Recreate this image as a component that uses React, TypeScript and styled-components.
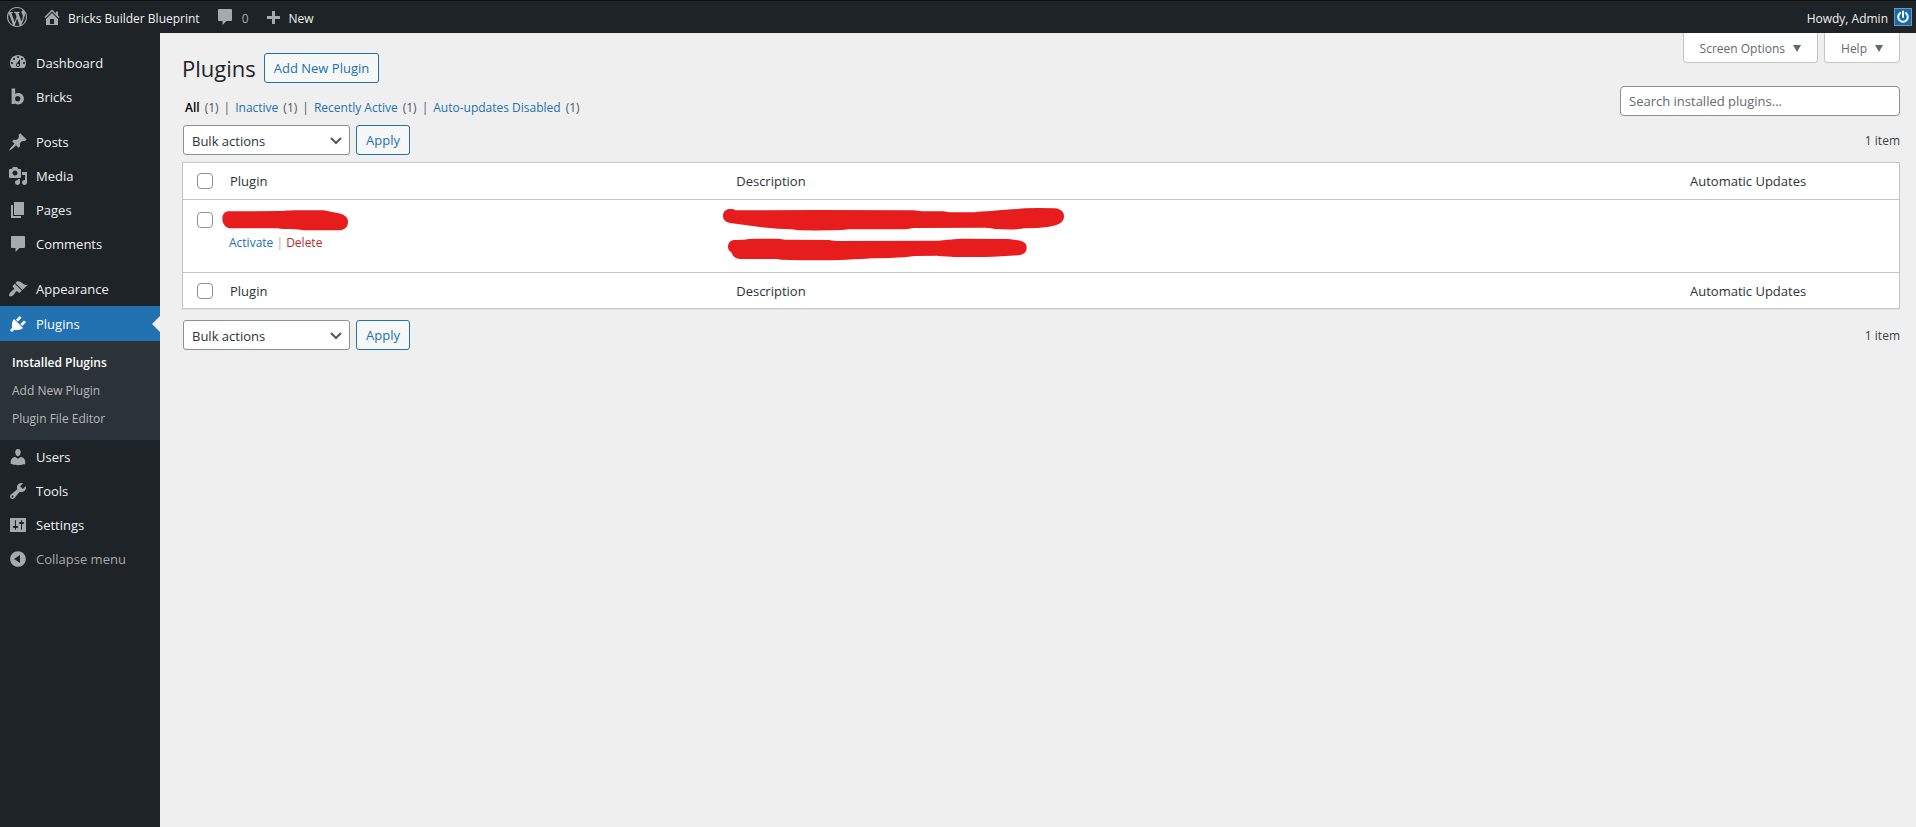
import React, { ReactNode } from "react";
import styled, { createGlobalStyle } from "styled-components";

const GlobalStyle = createGlobalStyle`
  *, *::before, *::after { box-sizing: border-box; }
  body {
    margin: 0;
    background: #efefef;
    color: #3c434a;
    font-family: "Open Sans", "Noto Sans", sans-serif;
    font-size: 12px;
    line-height: 20px;
  }
  button, input, select { font: inherit; }
  a { color: #2271b1; text-decoration: none; }
  ul { list-style: none; margin: 0; padding: 0; }
`;

const paths = {
  wordpress:
    "M20 10c0-5.51-4.49-10-10-10C4.48 0 0 4.49 0 10c0 5.52 4.48 10 10 10 5.51 0 10-4.48 10-10zM7.78 15.37L4.37 6.22c.55-.02 1.17-.08 1.17-.08.5-.06.44-1.13-.06-1.11 0 0-1.45.11-2.37.11-.18 0-.37 0-.58-.01C4.12 2.69 6.87 1.11 10 1.11c2.33 0 4.45.87 6.05 2.34-.68-.11-1.65.39-1.65 1.58 0 .74.45 1.36.9 2.1.35.61.55 1.36.55 2.46 0 1.49-1.4 5-1.4 5l-3.03-8.37c.54-.02.82-.17.82-.17.5-.05.44-1.25-.06-1.22 0 0-1.44.12-2.38.12-.87 0-2.33-.12-2.33-.12-.5-.03-.56 1.2-.06 1.22l.92.08 1.26 3.41zM17.41 10c.24-.64.74-1.87.43-4.25.7 1.29 1.05 2.71 1.05 4.25 0 3.29-1.73 6.24-4.4 7.78.97-2.59 1.94-5.2 2.92-7.78zM6.1 18.09C3.12 16.65 1.11 13.53 1.11 10c0-1.3.23-2.48.72-3.59C3.25 10.3 4.67 14.2 6.1 18.09zm4.03-6.63l2.58 6.98c-.86.29-1.76.45-2.71.45-.79 0-1.57-.11-2.29-.33.81-2.38 1.62-4.74 2.42-7.1z",
  home: "M16 8.5l1.53 1.53-1.06 1.06L10 4.6l-6.47 6.49-1.06-1.06L10 2.5l4 4v-2h2v4zm-6-2.46l6 5.99V18H4v-5.97zM12 17v-5H8v5h4z",
  plus: "M17 9v3h-5v5H9v-5H4V9h5V4h3v5h5z",
  dashboard:
    "M3.76 15h12.48A7.953 7.953 0 0 0 18 10c0-4.42-3.58-8-8-8s-8 3.58-8 8c0 1.89.66 3.63 1.76 5zM10 3c.55 0 1 .45 1 1s-.45 1-1 1-1-.45-1-1 .45-1 1-1zM6 5c.55 0 1 .45 1 1s-.45 1-1 1-1-.45-1-1 .45-1 1-1zm8 0c.55 0 1 .45 1 1s-.45 1-1 1-1-.45-1-1 .45-1 1-1zm-5.37 5.55L12 6v6c0 1.1-.9 2-2 2s-2-.9-2-2c0-.57.24-1.08.63-1.45zM4 9c.55 0 1 .45 1 1s-.45 1-1 1-1-.45-1-1 .45-1 1-1zm12 0c.55 0 1 .45 1 1s-.45 1-1 1-1-.45-1-1 .45-1 1-1zm-7 3c0 .55.45 1 1 1s1-.45 1-1-.45-1-1-1-1 .45-1 1z",
  bricks:
    "M3.600 1.500h3.600v5.600C8 6.400 9 6 10.200 6c3.200 0 5.700 2.500 5.700 5.700s-2.500 5.700-5.700 5.700c-1.300 0-2.300-.4-3.100-1.200V17H3.600zM9.700 8.900c-1.500 0-2.700 1.200-2.700 2.800s1.200 2.800 2.700 2.800 2.700-1.200 2.700-2.800S11.200 8.900 9.700 8.900z",
  post: "M10.44 3.02l1.82-1.82 6.36 6.35-1.83 1.82c-1.05-.68-2.48-.57-3.41.36l-.75.75c-.92.93-1.04 2.35-.35 3.41l-1.83 1.82-2.41-2.41-2.8 2.79c-.42.42-3.38 2.71-3.8 2.29s1.86-3.39 2.28-3.81l2.79-2.79L4.1 9.36l1.83-1.82c1.05.69 2.48.57 3.4-.36l.75-.75c.93-.92 1.05-2.35.36-3.41z",
  media:
    "M13 11V4c0-.55-.45-1-1-1h-1.67L9 1H5L3.67 3H2c-.55 0-1 .45-1 1v7c0 .55.45 1 1 1h10c.55 0 1-.45 1-1zM7 4.5c1.38 0 2.5 1.12 2.5 2.5S8.38 9.5 7 9.5 4.5 8.38 4.5 7 5.62 4.5 7 4.5zM14 6h5v10.500c0 1.380-1.120 2.500-2.500 2.500S14 17.880 14 16.500s1.120-2.500 2.500-2.500c.17 0 .34.02.5.05V9h-3V6zm-4 8.050V13h2v3.500c0 1.380-1.120 2.500-2.500 2.500S7 17.880 7 16.500 8.120 14 9.500 14c.17 0 .34.02.5.05z",
  page: "M6 15V2h10v13H6zm-1 1h8v2H3V5h2v11z",
  comment:
    "M4 2h12c.55 0 1 .45 1 1v10c0 .55-.45 1-1 1h-4.500L7.500 18v-4H4c-.55 0-1-.45-1-1V3c0-.55.45-1 1-1z",
  appearance:
    "M14.48 11.06L7.41 3.99l1.5-1.5c.5-.56 2.3-.47 3.51.32 1.21.8 1.43 1.28 2.91 2.1 1.18.64 2.45 1.26 4.45.85zm-.71.71L6.7 4.7 4.93 6.47c-.39.39-.39 1.02 0 1.41l1.06 1.06c.39.39.39 1.03 0 1.42-.6.6-1.43 1.11-2.21 1.69-.35.26-.7.53-1.01.84C1.43 14.23.4 16.08 1.4 17.07c.99 1 2.84-.03 4.18-1.36.31-.31.58-.66.85-1.02.57-.78 1.08-1.61 1.69-2.21.39-.39 1.02-.39 1.41 0l1.06 1.06c.39.39 1.02.39 1.41 0z",
  plugins:
    "M13.11 4.36L9.87 7.6 8 5.73l3.24-3.24c.35-.34 1.05-.2 1.56.32.52.51.66 1.21.31 1.55zm-8 1.77l.91-1.12 9.01 9.01-1.19.84c-.71.71-2.63 1.16-3.82 1.16H6.14L4.9 17.26c-.59.59-1.54.59-2.12 0-.59-.58-.59-1.53 0-2.12l1.24-1.24v-3.88c0-1.13.4-3.19 1.09-3.89zm7.26 3.97l3.24-3.24c.34-.35 1.04-.21 1.55.31.52.51.66 1.21.31 1.55l-3.24 3.25z",
  users:
    "M10 9.25c-2.27 0-2.73-3.44-2.73-3.44C7 4.02 7.82 2 9.97 2c2.16 0 2.98 2.02 2.71 3.81 0 0-.41 3.44-2.68 3.44zm0 2.57L12.72 10c2.39 0 4.52 2.33 4.52 4.53v2.49s-3.65 1.13-7.24 1.13c-3.65 0-7.24-1.13-7.24-1.13v-2.49c0-2.25 1.94-4.48 4.47-4.48z",
  tools:
    "M16.68 9.77c-1.34 1.34-3.3 1.67-4.95.99l-5.41 6.52c-.99.99-2.59.99-3.58 0s-.99-2.59 0-3.57l6.52-5.42c-.68-1.65-.35-3.61.99-4.95 1.28-1.28 3.12-1.62 4.72-1.06l-2.89 2.89 2.82 2.82 2.86-2.87c.53 1.58.18 3.39-1.08 4.65zM3.81 16.21c.4.39 1.04.39 1.43 0 .4-.4.4-1.04 0-1.43-.39-.4-1.03-.4-1.43 0-.39.39-.39 1.03 0 1.43z",
  settings:
    "M18 16V4c0-.55-.45-1-1-1H3c-.55 0-1 .45-1 1v12c0 .55.45 1 1 1h14c.55 0 1-.45 1-1zM8 11h1c.55 0 1 .45 1 1s-.45 1-1 1H8v1.500c0 .28-.22.5-.5.5s-.5-.22-.5-.5V13H6c-.55 0-1-.45-1-1s.45-1 1-1h1V5.500c0-.28.22-.5.5-.5s.5.22.5.5V11zm5-2h-1c-.55 0-1-.45-1-1s.45-1 1-1h1V5.500c0-.28.22-.5.5-.5s.5.22.5.5V7h1c.55 0 1 .45 1 1s-.45 1-1 1h-1v5.500c0 .28-.22.5-.5.5s-.5-.22-.5-.5V9z",
  collapse:
    "M10 2.160c-4.330 0-7.840 3.510-7.840 7.840s3.510 7.840 7.840 7.840 7.840-3.510 7.840-7.840S14.330 2.160 10 2.160zm2 11.720L6.120 9.960 12 6.040v7.840z",
};

type IconName = keyof typeof paths;

const IconSvg = styled.svg`
  flex: none;
  width: 20px;
  height: 20px;
  fill: currentColor;
`;

const Icon = ({ name }: { name: IconName }) => (
  <IconSvg viewBox="0 0 20 20" aria-hidden="true">
    <path d={paths[name]} fillRule="evenodd" />
  </IconSvg>
);

/* Admin bar */

const Page = styled.div`
  display: flex;
  flex-direction: column;
  min-height: 100vh;
`;

const AdminBar = styled.header`
  display: flex;
  align-items: center;
  height: 33px;
  padding: 0 4px 0 7px;
  border-top: 1px solid #0b0d0f;
  background: #1d2327;
`;

const BarLink = styled.a<{ $gap?: number; $after: number }>`
  display: flex;
  align-items: center;
  gap: ${(p) => p.$gap ?? 6}px;
  margin-right: ${(p) => p.$after}px;
  color: #f0f0f1;
  svg { color: #a7aaad; }
`;

const BarLabel = styled.span<{ $muted?: boolean }>`
  padding-top: 3px;
  color: ${(p) => (p.$muted ? "#a7aaad" : "inherit")};
`;

const Account = styled.a`
  display: flex;
  align-items: center;
  gap: 6px;
  margin-left: auto;
  color: #f0f0f1;
`;

const Avatar = styled.svg`
  width: 18px;
  height: 18px;
  border: 1px solid #8c8f94;
  background: #0a6fb5;
`;

/* Side menu */

const Body = styled.div`
  display: flex;
  flex: 1;
`;

const SideNav = styled.nav`
  flex: none;
  width: 160px;
  padding-top: 13px;
  background: #1d2327;
`;

const MenuItem = styled.li<{ $spaced?: boolean }>`
  margin-top: ${(p) => (p.$spaced ? 11 : 0)}px;
`;

const MenuLink = styled.a<{ $current?: boolean }>`
  position: relative;
  display: flex;
  align-items: center;
  gap: 8px;
  height: ${(p) => (p.$current ? 35 : 34)}px;
  padding-left: 8px;
  font-size: 13px;
  color: ${(p) => (p.$current ? "#fff" : "#f0f0f1")};
  background: ${(p) => (p.$current ? "#2271b1" : "transparent")};
  svg { color: ${(p) => (p.$current ? "#fff" : "#a7aaad")}; }
  &::after {
    content: ${(p) => (p.$current ? '""' : "none")};
    position: absolute;
    right: 0;
    top: 10px;
    border: 8px solid transparent;
    border-left-width: 0;
    border-right-color: #efefef;
  }
`;

const SubMenu = styled.ul`
  padding: 8px 0 7px;
  background: #2c3338;
`;

const SubLink = styled.a<{ $current?: boolean }>`
  display: block;
  padding: 4px 12px;
  font-weight: ${(p) => (p.$current ? 600 : 400)};
  color: ${(p) => (p.$current ? "#fff" : "#b4b9be")};
`;

const CollapseButton = styled.button`
  display: flex;
  align-items: center;
  gap: 8px;
  height: 34px;
  padding: 0 0 0 8px;
  border: 0;
  background: none;
  font-size: 13px;
  color: #a7aaad;
`;

/* Content */

const Main = styled.main`
  flex: 1;
  min-width: 0;
  padding: 0 16px 0 22px;
`;

const Head = styled.div`
  display: flex;
  justify-content: space-between;
`;

const HeadLeft = styled.div`
  padding-top: 20px;
`;

const HeadRight = styled.div`
  display: flex;
  flex-direction: column;
  align-items: flex-end;
  gap: 23px;
`;

const TitleRow = styled.div`
  display: flex;
  align-items: center;
  gap: 8px;
`;

const Title = styled.h1`
  margin: 0;
  font-size: 22px;
  line-height: 30px;
  font-weight: 400;
  color: #1d2327;
`;

const OutlineButton = styled.button`
  height: 30px;
  padding: 0 9px;
  border: 1px solid #2271b1;
  border-radius: 3px;
  background: #f6f7f7;
  font-size: 13px;
  color: #2271b1;
  white-space: nowrap;
`;

const Filters = styled.ul`
  display: flex;
  margin: 15px 0 0 3px;
  color: #50575e;
  li { display: flex; }
  li + li::before {
    content: "|";
    margin: 0 5px;
  }
`;

const FilterLink = styled.a<{ $current?: boolean }>`
  margin-right: 5px;
  font-weight: ${(p) => (p.$current ? 600 : 400)};
  color: ${(p) => (p.$current ? "#000" : "#2271b1")};
`;

const MetaTabs = styled.div`
  display: flex;
  gap: 6px;
`;

const MetaTab = styled.button`
  display: flex;
  align-items: center;
  gap: 8px;
  height: 30px;
  padding: 2px 16px 0;
  border: 1px solid #c3c4c7;
  border-top: 0;
  border-radius: 0 0 4px 4px;
  background: #fff;
  color: #646970;
  svg {
    width: 8px;
    height: 7px;
    fill: #646970;
  }
`;

const SearchInput = styled.input`
  width: 280px;
  height: 30px;
  padding: 0 8px;
  border: 1px solid #8c8f94;
  border-radius: 4px;
  background: #fff;
  font-size: 13px;
  color: #2c3338;
  &::placeholder { color: #646970; opacity: 1; }
`;

const TableNav = styled.form<{ $before: number; $after: number }>`
  display: flex;
  align-items: center;
  gap: 6px;
  padding: ${(p) => p.$before}px 0 ${(p) => p.$after}px 1px;
`;

const SelectBox = styled.div`
  position: relative;
  width: 167px;
  svg {
    position: absolute;
    right: 8px;
    top: 12px;
    width: 12px;
    height: 8px;
    pointer-events: none;
  }
`;

const Select = styled.select`
  appearance: none;
  display: block;
  width: 100%;
  height: 30px;
  padding: 1px 24px 0 8px;
  border: 1px solid #8c8f94;
  border-radius: 3px;
  background: #fff;
  font-size: 13px;
  color: #2c3338;
`;

const ItemCount = styled.span`
  margin-left: auto;
  padding-top: 2px;
`;

/* Plugins table */

const Table = styled.table`
  width: 100%;
  table-layout: fixed;
  border: 1px solid #c3c4c7;
  border-spacing: 0;
  background: #fff;
  box-shadow: 0 1px 1px rgba(0, 0, 0, 0.04);
`;

const Col = styled.col<{ $width?: string }>`
  width: ${(p) => p.$width ?? "auto"};
`;

const HeadCell = styled.th<{ $line?: boolean }>`
  height: ${(p) => (p.$line ? 37 : 35)}px;
  padding: 0 10px 0 9px;
  border-bottom: ${(p) => (p.$line ? "1px solid #c3c4c7" : "0")};
  text-align: left;
  font-size: 13px;
  font-weight: 400;
  color: #2c3338;
`;

const CheckHead = styled(HeadCell)`
  padding: 0 0 0 14px;
`;

const Cell = styled.td<{ $pad: string }>`
  height: 73px;
  padding: ${(p) => p.$pad};
  border-bottom: 1px solid #c3c4c7;
  vertical-align: top;
`;

const Checkbox = styled.input`
  appearance: none;
  display: block;
  width: 16px;
  height: 16px;
  margin: 0;
  border: 1px solid #8c8f94;
  border-radius: 4px;
  background: #fff;
`;

const Marker = styled.svg<{ $w: number; $h: number; $pull?: number }>`
  display: block;
  width: ${(p) => p.$w}px;
  height: ${(p) => p.$h}px;
  margin-left: ${(p) => -(p.$pull ?? 0)}px;
  fill: #e71d1d;
`;

const RowActions = styled.div`
  padding: 2px 0 0 7px;
  color: #a7aaad;
`;

const DeleteLink = styled.a`
  color: #b32d2e;
`;

const Item = ({
  icon,
  children,
  spaced,
}: {
  icon: IconName;
  children: ReactNode;
  spaced?: boolean;
}) => (
  <MenuItem $spaced={spaced}>
    <MenuLink href="#">
      <Icon name={icon} />
      {children}
    </MenuLink>
  </MenuItem>
);

const BulkActions = ({ id, before, after }: { id: string; before: number; after: number }) => (
  <TableNav $before={before} $after={after}>
    <SelectBox>
      <Select id={id} aria-label="Select bulk action">
        <option>Bulk actions</option>
        <option>Activate</option>
        <option>Delete</option>
      </Select>
      <svg viewBox="0 0 12 8" aria-hidden="true">
        <path d="M1 1l5 5 5-5" fill="none" stroke="#50575e" strokeWidth="2" />
      </svg>
    </SelectBox>
    <OutlineButton type="button">Apply</OutlineButton>
    <ItemCount>1 item</ItemCount>
  </TableNav>
);

const HeadingRow = ({ line }: { line?: boolean }) => (
  <tr>
    <CheckHead $line={line}>
      <Checkbox type="checkbox" aria-label="Select all" />
    </CheckHead>
    <HeadCell $line={line}>Plugin</HeadCell>
    <HeadCell $line={line}>Description</HeadCell>
    <HeadCell $line={line}>Automatic Updates</HeadCell>
  </tr>
);

const Triangle = () => (
  <svg viewBox="0 0 8 7" aria-hidden="true">
    <path d="M0 0h8L4 7z" />
  </svg>
);

const filters = [
  { label: "All", current: true },
  { label: "Inactive" },
  { label: "Recently Active" },
  { label: "Auto-updates Disabled" },
];

export default function App() {
  return (
    <Page>
      <GlobalStyle />
      <AdminBar>
        <BarLink href="#" $after={15} aria-label="About WordPress">
          <Icon name="wordpress" />
        </BarLink>
        <BarLink href="#" $after={15}>
          <Icon name="home" />
          <BarLabel>Bricks Builder Blueprint</BarLabel>
        </BarLink>
        <BarLink href="#" $gap={7} $after={14}>
          <Icon name="comment" />
          <BarLabel $muted>0</BarLabel>
        </BarLink>
        <BarLink href="#" $after={0}>
          <Icon name="plus" />
          <BarLabel>New</BarLabel>
        </BarLink>
        <Account href="#">
          <BarLabel>Howdy, Admin</BarLabel>
          <Avatar viewBox="0 0 16 16" aria-hidden="true">
            <path
              d="M5.200 4a4.800 4.800 0 1 0 5.600 0M8 2.500V8"
              fill="none"
              stroke="#fff"
              strokeWidth="2"
              strokeLinecap="round"
            />
          </Avatar>
        </Account>
      </AdminBar>

      <Body>
        <SideNav aria-label="Main menu">
          <ul>
            <Item icon="dashboard">Dashboard</Item>
            <Item icon="bricks">Bricks</Item>
            <Item icon="post" spaced>Posts</Item>
            <Item icon="media">Media</Item>
            <Item icon="page">Pages</Item>
            <Item icon="comment">Comments</Item>
            <Item icon="appearance" spaced>Appearance</Item>
            <MenuItem>
              <MenuLink href="#" $current>
                <Icon name="plugins" />
                Plugins
              </MenuLink>
              <SubMenu>
                <li><SubLink href="#" $current>Installed Plugins</SubLink></li>
                <li><SubLink href="#">Add New Plugin</SubLink></li>
                <li><SubLink href="#">Plugin File Editor</SubLink></li>
              </SubMenu>
            </MenuItem>
            <Item icon="users">Users</Item>
            <Item icon="tools">Tools</Item>
            <Item icon="settings">Settings</Item>
            <li>
              <CollapseButton type="button">
                <Icon name="collapse" />
                Collapse menu
              </CollapseButton>
            </li>
          </ul>
        </SideNav>

        <Main>
          <Head>
            <HeadLeft>
              <TitleRow>
                <Title>Plugins</Title>
                <OutlineButton type="button">Add New Plugin</OutlineButton>
              </TitleRow>
              <Filters>
                {filters.map((f) => (
                  <li key={f.label}>
                    <FilterLink href="#" $current={f.current}>{f.label}</FilterLink>
                    <span>(1)</span>
                  </li>
                ))}
              </Filters>
            </HeadLeft>
            <HeadRight>
              <MetaTabs>
                <MetaTab type="button">Screen Options <Triangle /></MetaTab>
                <MetaTab type="button">Help <Triangle /></MetaTab>
              </MetaTabs>
              <SearchInput
                type="search"
                aria-label="Search installed plugins"
                placeholder="Search installed plugins..."
              />
            </HeadRight>
          </Head>

          <BulkActions id="bulk-top" before={7} after={7} />
          <Table>
            <colgroup>
              <Col $width="38px" />
              <Col $width="29.5%" />
              <Col />
              <Col $width="218px" />
            </colgroup>
            <thead>
              <HeadingRow line />
            </thead>
            <tbody>
              <tr>
                <Cell $pad="12px 0 0 14px">
                  <Checkbox type="checkbox" aria-label="Select plugin" />
                </Cell>
                <Cell $pad="9px 0 0 1px">
                  <Marker viewBox="186 387 381 66" $w={127} $h={22} aria-hidden="true">
                    <path d="M187 416C187 402 195 394 208 394L360 393C385 390 440 390 490 391L528 398C552 402 564 410 564 425C564 442 553 450 536 451L430 451C420 448 400 448 368 447L352 445L210 445C197 443 187 431 187 416Z" />
                  </Marker>
                  <RowActions>
                    <a href="#">Activate</a> | <DeleteLink href="#">Delete</DeleteLink>
                  </RowActions>
                </Cell>
                <Cell $pad="7px 0 0 0">
                  <Marker viewBox="66 171 1029 162" $w={343} $h={54} $pull={5} aria-hidden="true">
                    <path d="M69 198C69 184 79 176 93 177Q101 177 107 181L350 180L640 181Q655 182 664 184L730 184L748 187L825 187Q840 184 875 183Q920 178 955 177Q975 173 1065 175C1083 177 1092 186 1092 199C1092 212 1084 221 1067 226Q1040 234 1012 234L974 235Q950 240 885 237Q875 234 855 233L640 234Q625 238 600 238L444 238Q430 242 295 241L275 238L233 236L180 231L90 219C76 216 69 208 69 198Z" />
                    <path d="M84 291C84 276 93 269 108 270L132 269Q145 266 165 266L235 266L256 269L385 270L408 273L715 272Q760 267 785 266L925 267Q945 269 955 271C972 274 980 281 980 293C980 306 971 314 955 316L905 319Q880 322 790 321Q735 320 710 317L645 318Q620 322 570 324L515 325Q485 328 440 329Q350 333 245 329L228 327L120 327C105 326 98 318 94 307Q84 301 84 291Z" />
                  </Marker>
                </Cell>
                <Cell $pad="0" />
              </tr>
            </tbody>
            <tfoot>
              <HeadingRow />
            </tfoot>
          </Table>
          <BulkActions id="bulk-bottom" before={11} after={20} />
        </Main>
      </Body>
    </Page>
  );
}
